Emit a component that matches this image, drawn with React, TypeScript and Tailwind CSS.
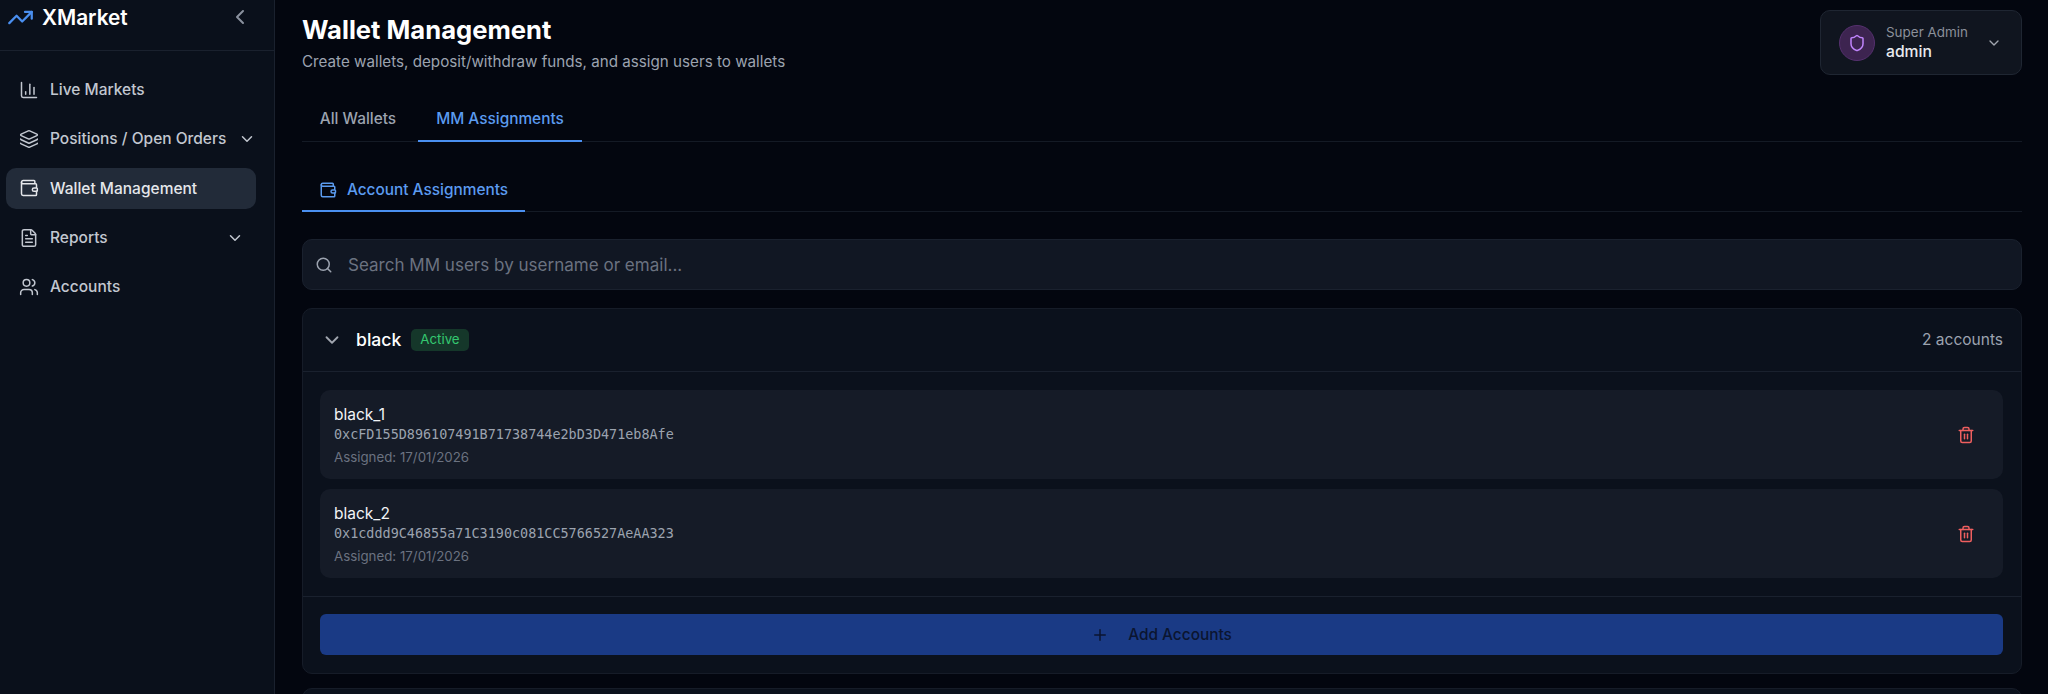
import { BarChart3, ChevronDown, ChevronLeft, FileText, Layers, Plus, Search, Shield, Trash2, TrendingUp, Users, Wallet } from "lucide-react";

const nav = [
  { label: "Live Markets", Icon: BarChart3 },
  { label: "Positions / Open Orders", Icon: Layers, chevron: "ml-[12px]" },
  { label: "Wallet Management", Icon: Wallet, active: true },
  { label: "Reports", Icon: FileText, chevron: "ml-[118px]" },
  { label: "Accounts", Icon: Users },
];

const accounts = [
  { name: "black_1", address: "0xcFD155D896107491B71738744e2bD3D471eb8Afe" },
  { name: "black_2", address: "0x1cddd9C46855a71C3190c081CC5766527AeAA323" },
];

export default function App() {
  return (
    <div className="flex h-[694px] w-[2048px] overflow-hidden bg-[#03060f] font-['Inter',sans-serif] text-white">
      <aside className="h-full w-[275px] shrink-0 border-r border-[#1a212e] bg-[#0a101b]">
        <div className="flex h-[51px] items-start border-b border-[#1a212e] pl-[7px] pr-[22px] pt-[2px]">
          <TrendingUp className="mt-[2px] h-[27px] w-[27px] text-[#4a8ff0]" strokeWidth={2} />
          <span className="ml-[8px] mt-[1px] text-[20.8px] font-semibold leading-[30px]">XMarket</span>
          <ChevronLeft className="ml-auto mt-[3px] h-[24px] w-[24px] text-[#8a919e]" strokeWidth={2} />
        </div>
        <nav className="flex flex-col gap-[8px] px-[6px] pt-[18px]">
          {nav.map(({ label, Icon, active, chevron }) => (
            <div
              key={label}
              className={`flex h-[41.3px] w-[250px] items-center rounded-[10px] pl-[13px] text-[15.5px] font-[450] ${active ? "bg-[#222b39] text-[#e5e7eb]" : "text-[#c2c7d0]"}`}
            >
              <Icon className="h-[20px] w-[20px] shrink-0" strokeWidth={1.8} />
              <span className="ml-[11px] whitespace-nowrap">{label}</span>
              {chevron && <ChevronDown className={`h-[18px] w-[18px] shrink-0 ${chevron}`} strokeWidth={2} />}
            </div>
          ))}
        </nav>
      </aside>

      <main className="min-w-0 flex-1 pl-[27px] pr-[26px]">
        <header className="flex h-[83px] items-start justify-between">
          <div className="pt-[13px]">
            <h1 className="text-[25.6px] font-bold leading-[34px]">Wallet Management</h1>
            <p className="mt-[3px] text-[15.2px] leading-[24px] text-[#9ca3af]">Create wallets, deposit/withdraw funds, and assign users to wallets</p>
          </div>
          <div className="mt-[10px] flex h-[65px] w-[202px] items-center rounded-[10px] border border-[#1f2632] bg-[#10151f] pl-[18px] pr-[19px]">
            <div className="flex h-[36px] w-[36px] items-center justify-center rounded-full border border-[#55306e] bg-[#3d2450]">
              <Shield className="h-[18px] w-[18px] text-[#c084fc]" strokeWidth={2} />
            </div>
            <div className="ml-[11px] flex flex-col">
              <span className="-mt-[1px] mb-[1px] text-[13.44px] leading-[18px] text-[#8b909a]">Super Admin</span>
              <span className="text-[15.68px] font-medium leading-[20px] text-[#e8eaee]">admin</span>
            </div>
            <ChevronDown className="ml-auto h-[16px] w-[16px] text-[#a1a6af]" strokeWidth={2} />
          </div>
        </header>

        <div className="mt-[17px] flex h-[42px] border-b border-[#141a25]">
          <div className="flex h-[42px] w-[116px] items-center justify-center pb-[5px] pr-[4px] text-[15.4px] font-[450] text-[#9ca3af]">All Wallets</div>
          <div className="flex h-[42px] w-[164px] items-center justify-center border-b-2 border-[#4a8ff0] pb-[3px] text-[15.4px] font-[450] text-[#5b9bf0]">MM Assignments</div>
        </div>

        <div className="mt-[28px] flex h-[42px] border-b border-[#141a25]">
          <div className="flex h-[42px] w-[223px] items-center justify-center gap-[10px] border-b-2 border-[#4a8ff0] text-[15.4px] font-[450] text-[#5b9bf0]">
            <Wallet className="h-[18px] w-[18px]" strokeWidth={2} />
            Account Assignments
          </div>
        </div>

        <div className="mt-[27px] flex h-[51px] items-center rounded-[10px] border border-[#1a212e] bg-[#111723] pl-[12px]">
          <Search className="h-[18px] w-[18px] text-[#9ca3af]" strokeWidth={2} />
          <span className="ml-[15px] pt-[1px] text-[17.05px] text-[#6b7280]">Search MM users by username or email...</span>
        </div>

        <section className="mt-[18px] h-[366px] rounded-[10px] border border-[#161c28] bg-[#0b111c]">
          <div className="flex h-[63px] items-center border-b border-[#1a212e] pl-[18px] pr-[18px]">
            <ChevronDown className="h-[22px] w-[22px] text-[#a1a6af]" strokeWidth={2} />
            <span className="ml-[13px] pt-[1px] text-[17.6px] font-medium text-white">black</span>
            <span className="ml-[10px] flex h-[22px] items-center rounded-[5px] bg-[#15372a] px-[9px] text-[13.3px] text-[#34c870]">Active</span>
            <span className="ml-auto text-[15.5px] text-[#9ca3af]">2 accounts</span>
          </div>
          <div className="flex flex-col gap-[10px] border-b border-[#1a212e] px-[18px] pb-[18px] pt-[18px]">
            {accounts.map((a) => (
              <div key={a.name} className="-ml-[1px] flex h-[89px] items-center justify-between rounded-[10px] bg-[#151b27] pl-[14px] pr-[28px]">
                <div className="flex flex-col pt-[1px]">
                  <span className="text-[15.5px] leading-[22px] text-[#f3f4f6]">{a.name}</span>
                  <span className="font-['DejaVu_Sans_Mono',monospace] text-[13.44px] leading-[18px] text-[#9ca3af]">{a.address}</span>
                  <span className="mt-[4px] text-[13.3px] leading-[18px] text-[#6b7280]">Assigned: 17/01/2026</span>
                </div>
                <Trash2 className="h-[18px] w-[18px] text-[#ef5f5f]" strokeWidth={2} />
              </div>
            ))}
          </div>
          <div className="pl-[17px] pr-[18px] pt-[17px]">
            <div className="flex h-[41px] items-center justify-center rounded-[6px] bg-[#1a3a85] text-[15.4px] font-[450] text-[#0b1530]">
              <Plus className="h-[18px] w-[18px]" strokeWidth={2} />
              <span className="ml-[19px]">Add Accounts</span>
            </div>
          </div>
        </section>

        <div className="mt-[14px] h-[60px] rounded-[10px] border border-[#161c28] bg-[#0b111c]" />
      </main>
    </div>
  );
}
